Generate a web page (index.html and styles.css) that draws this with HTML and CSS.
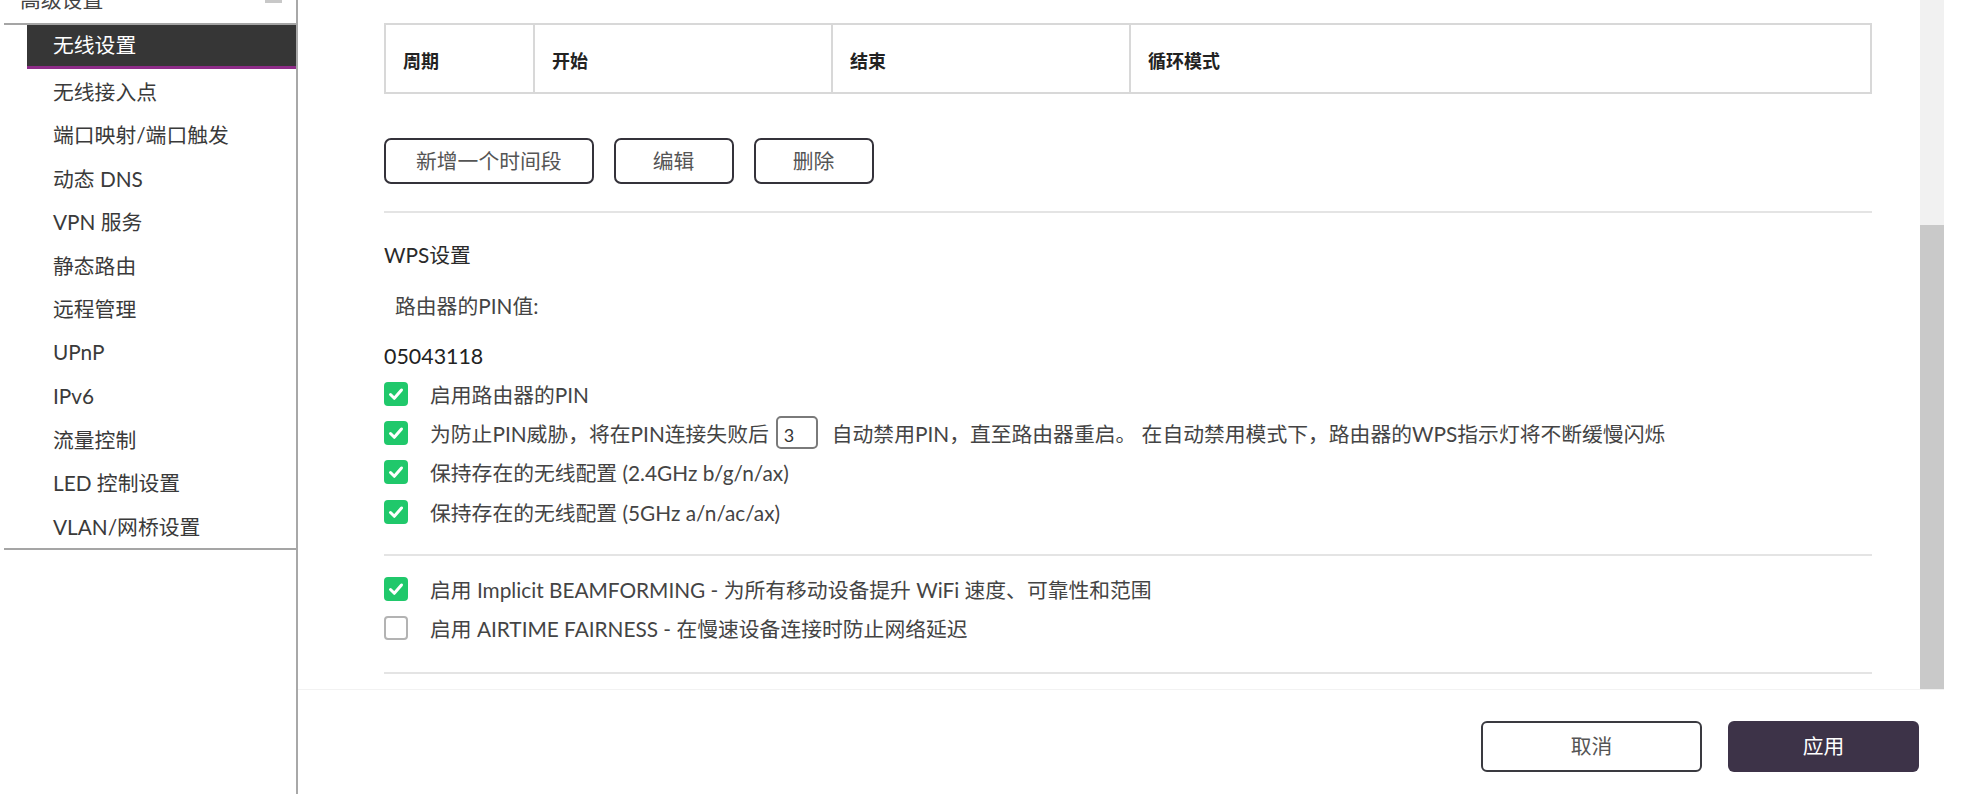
FILE: index.html
```html
<!DOCTYPE html>
<html lang="zh-CN">
<head>
<meta charset="utf-8">
<title>无线设置</title>
<link rel="stylesheet" href="styles.css">
</head>
<body>
<div class="page">
  <aside class="sidebar">
    <div class="side-head">
      <span class="side-title">高级设置</span>
      <span class="collapse-icon"></span>
    </div>
    <div class="side-menu">
      <ul class="menu">
        <li class="menu-item active">无线设置</li>
        <li class="menu-item">无线接入点</li>
        <li class="menu-item">端口映射/端口触发</li>
        <li class="menu-item">动态 DNS</li>
        <li class="menu-item">VPN 服务</li>
        <li class="menu-item">静态路由</li>
        <li class="menu-item">远程管理</li>
        <li class="menu-item">UPnP</li>
        <li class="menu-item">IPv6</li>
        <li class="menu-item">流量控制</li>
        <li class="menu-item">LED 控制设置</li>
        <li class="menu-item">VLAN/网桥设置</li>
      </ul>
    </div>
  </aside>

  <main class="main">
    <div class="pane">
      <div class="pane-content">
        <div class="sched-table">
          <div class="th">周期</div>
          <div class="th">开始</div>
          <div class="th">结束</div>
          <div class="th">循环模式</div>
        </div>

        <div class="btn-row">
          <button class="btn-outline">新增一个时间段</button>
          <button class="btn-outline">编辑</button>
          <button class="btn-outline">删除</button>
        </div>

        <div class="divider divider-first"></div>

        <div class="section-title">WPS设置</div>
        <div class="pin-label">路由器的PIN值:</div>
        <div class="pin-value">05043118</div>

        <div class="check-list">
          <div class="check-row">
            <span class="checkbox checked"><svg viewBox="0 0 24 24"><path d="M6.5 12.5l3.8 3.8 7.2-8.3"/></svg></span>
            <span class="check-text">启用路由器的PIN</span>
          </div>
          <div class="check-row">
            <span class="checkbox checked"><svg viewBox="0 0 24 24"><path d="M6.5 12.5l3.8 3.8 7.2-8.3"/></svg></span>
            <span class="check-text">为防止PIN威胁，将在PIN连接失败后</span>
            <span class="num-input">3</span>
            <span class="check-text">自动禁用PIN，直至路由器重启。 在自动禁用模式下，路由器的WPS指示灯将不断缓慢闪烁</span>
          </div>
          <div class="check-row">
            <span class="checkbox checked"><svg viewBox="0 0 24 24"><path d="M6.5 12.5l3.8 3.8 7.2-8.3"/></svg></span>
            <span class="check-text">保持存在的无线配置 (2.4GHz b/g/n/ax)</span>
          </div>
          <div class="check-row">
            <span class="checkbox checked"><svg viewBox="0 0 24 24"><path d="M6.5 12.5l3.8 3.8 7.2-8.3"/></svg></span>
            <span class="check-text">保持存在的无线配置 (5GHz a/n/ac/ax)</span>
          </div>
        </div>

        <div class="divider divider-mid"></div>

        <div class="check-list check-list-second">
          <div class="check-row">
            <span class="checkbox checked"><svg viewBox="0 0 24 24"><path d="M6.5 12.5l3.8 3.8 7.2-8.3"/></svg></span>
            <span class="check-text">启用 Implicit BEAMFORMING - 为所有移动设备提升 WiFi 速度、可靠性和范围</span>
          </div>
          <div class="check-row">
            <span class="checkbox"></span>
            <span class="check-text">启用 AIRTIME FAIRNESS - 在慢速设备连接时防止网络延迟</span>
          </div>
        </div>

        <div class="divider divider-last"></div>
      </div>
      <div class="scrollbar"><div class="thumb"></div></div>
    </div>

    <footer class="footer">
      <button class="btn-cancel">取消</button>
      <button class="btn-apply">应用</button>
    </footer>
  </main>
</div>
</body>
</html>
```

FILE: styles.css
```css
* {
  box-sizing: border-box;
}

html, body {
  margin: 0;
  padding: 0;
  height: 100%;
  background: #ffffff;
  overflow: hidden;
}

body {
  font-family: "Lato", "Noto Sans CJK SC", sans-serif;
  color: #3a3a3a;
  font-size: 20.8px;
}

.page {
  display: flex;
  height: 794px;
}

/* ---------- Sidebar ---------- */
.sidebar {
  width: 298px;
  flex: 0 0 298px;
  border-right: 2px solid #a8a8a8;
  height: 100%;
}

.side-head {
  margin-top: -23px;
  margin-left: 4px;
  height: 48px;
  border-bottom: 2px solid #a5a5a5;
  display: flex;
  align-items: center;
  justify-content: space-between;
  padding-left: 16px;
  padding-right: 14px;
}

.side-title {
  font-size: 20.8px;
  color: #444;
  line-height: 1;
}

.collapse-icon {
  width: 17px;
  height: 3px;
  margin-top: 3px;
  background: #c8c8c8;
}

.side-menu {
  margin-left: 4px;
  padding-left: 23px;
  border-bottom: 2px solid #a5a5a5;
}

.menu {
  list-style: none;
  margin: 0;
  padding: 0;
}

.menu-item {
  height: 43.5px;
  display: flex;
  align-items: center;
  padding-left: 26px;
  font-size: 20.8px;
  color: #3a3a3a;
}

.menu-item.active {
  height: 44px;
  background: #363636;
  color: #ffffff;
  border-bottom: 3px solid #8e2c88;
  padding-bottom: 4px;
}

/* ---------- Main ---------- */
.main {
  flex: 1;
  margin-right: 23px;
  display: flex;
  flex-direction: column;
  height: 100%;
}

.pane {
  height: 690px;
  flex: 0 0 690px;
  display: flex;
  border-bottom: 1px solid #f2f2f2;
}

.pane-content {
  flex: 1;
  padding: 23px 48px 0 86px;
  overflow: hidden;
}

.scrollbar {
  width: 24px;
  flex: 0 0 24px;
  background: #f1f1f1;
  display: flex;
  flex-direction: column;
}

.thumb {
  margin-top: 225px;
  flex: 1;
  background: #c9c9c9;
}

/* table */
.sched-table {
  display: grid;
  grid-template-columns: 147px 298px 298px 1fr;
  height: 71px;
  border: 2px solid #d8d8d8;
}

.th {
  display: flex;
  align-items: center;
  padding-left: 17px;
  padding-top: 2px;
  font-size: 18px;
  font-weight: 700;
  color: #222;
}

.th + .th {
  border-left: 2px solid #d8d8d8;
}

/* buttons */
.btn-row {
  display: flex;
  gap: 20px;
  margin-top: 44px;
}

.btn-outline {
  height: 46px;
  min-width: 120px;
  padding: 0 30px 3px;
  border: 2px solid #34323a;
  border-radius: 7px;
  background: #fff;
  font-family: "Lato", "Noto Sans CJK SC", sans-serif;
  font-size: 20.8px;
  color: #555;
}

.divider {
  height: 2px;
  background: #e4e4e4;
}

.divider-first {
  margin-top: 27px;
}

.divider-mid {
  margin-top: 23px;
}

.divider-last {
  margin-top: 24px;
}

.section-title {
  margin-top: 27px;
  line-height: 30px;
  font-size: 20.8px;
  color: #2a2a2a;
}

.pin-label {
  margin-top: 21px;
  padding-left: 11px;
  line-height: 30px;
  font-size: 20.8px;
  color: #444;
}

.pin-value {
  margin-top: 20px;
  line-height: 30px;
  font-size: 21.4px;
  color: #222;
}

.check-list {
  margin-top: 3px;
}

.check-list-second {
  margin-top: 13px;
}

.check-row {
  height: 39.3px;
  display: flex;
  align-items: center;
}

.checkbox {
  width: 24px;
  height: 24px;
  flex: 0 0 24px;
  border-radius: 4px;
  border: 2px solid #b3b3b3;
  background: #fff;
  margin-right: 22px;
  display: flex;
  align-items: center;
  justify-content: center;
}

.checkbox.checked {
  border: none;
  background: #20c86b;
}

.checkbox svg {
  width: 24px;
  height: 24px;
  fill: none;
  stroke: #ffffff;
  stroke-width: 3;
  stroke-linecap: round;
  stroke-linejoin: round;
}

.check-text {
  font-size: 20.8px;
  color: #444;
  white-space: nowrap;
}

.num-input {
  width: 42px;
  height: 33px;
  margin: 0 14px 0 7px;
  border: 2px solid #7a7a7a;
  border-radius: 5px;
  padding-left: 6px;
  padding-top: 4px;
  font-size: 18px;
  color: #333;
  display: flex;
  align-items: center;
}

/* footer */
.footer {
  flex: 1;
  display: flex;
  justify-content: flex-end;
  align-items: flex-start;
  gap: 26px;
  padding-top: 31px;
  padding-right: 25px;
}

.btn-cancel,
.btn-apply {
  height: 51px;
  padding-bottom: 5px;
  font-family: "Lato", "Noto Sans CJK SC", sans-serif;
  font-size: 20.8px;
  border-radius: 6px;
}

.btn-cancel {
  width: 221px;
  background: #fff;
  border: 2px solid #3a3a40;
  color: #555;
}

.btn-apply {
  width: 191px;
  background: #3d3348;
  border: none;
  color: #fff;
}
```
